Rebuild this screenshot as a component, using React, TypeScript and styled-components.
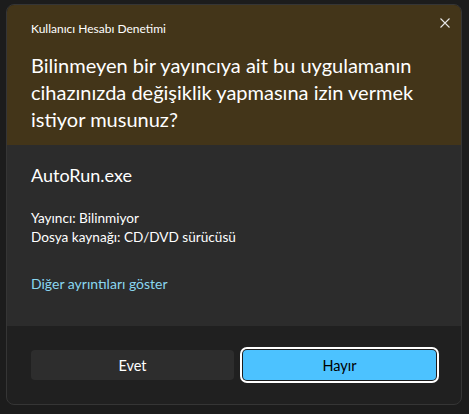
import React from "react";
import styled, { createGlobalStyle } from "styled-components";

const Global = createGlobalStyle`
  html, body { margin: 0; padding: 0; background: #1c1c1c; }
  body { width: 469px; height: 414px; overflow: hidden; font-family: Lato, "Noto Sans", sans-serif; }
  * { box-sizing: border-box; }
`;

const Page = styled.div`
  width: 469px;
  height: 414px;
  padding: 4px 7px 9px 6px;
`;

const Dialog = styled.div`
  width: 456px;
  height: 401px;
  border: 1px solid #353535;
  border-radius: 8px;
  overflow: hidden;
  display: flex;
  flex-direction: column;
  background: #202020;
`;

const Header = styled.div`
  position: relative;
  background: #433519;
  padding: 16px 24px 8px 24px;
  height: 140px;
`;

const SmallTitle = styled.div`
  font-size: 12px;
  line-height: 16px;
  color: #ffffff;
`;

const Heading = styled.div`
  margin-top: 15px;
  font-size: 20px;
  line-height: 27px;
  color: #ffffff;
`;

const Close = styled.button`
  position: absolute;
  top: 8px;
  right: 6px;
  width: 20px;
  height: 20px;
  padding: 0;
  border: none;
  background: transparent;
  display: flex;
  align-items: center;
  justify-content: center;
`;

const Body = styled.div`
  background: #2c2c2c;
  padding: 18px 24px 0 24px;
  height: 181px;
`;

const AppName = styled.div`
  font-size: 18px;
  line-height: 24px;
  color: #ffffff;
`;

const Info = styled.div`
  margin-top: 22px;
  font-size: 13.6px;
  line-height: 19px;
  color: #ffffff;
`;

const Link = styled.div`
  margin-top: 27px;
  font-size: 14px;
  line-height: 20px;
  color: #8ad6f0;
`;

const Footer = styled.div`
  flex: 1;
  padding: 24px 25px 0 24px;
  display: flex;
  gap: 9px;
`;

const Button = styled.button<{ $primary?: boolean }>`
  height: 30px;
  border: none;
  border-radius: 4px;
  font-family: inherit;
  font-size: 14.5px;
  color: ${(p) => (p.$primary ? "#000000" : "#ffffff")};
  background: ${(p) => (p.$primary ? "#4cc2ff" : "#2d2d2d")};
  box-shadow: ${(p) => (p.$primary ? "0 0 0 1px #1c1c1c, 0 0 0 3px #ffffff" : "none")};
  width: ${(p) => (p.$primary ? "193px" : "203px")};
`;

export default function App() {
  return (
    <>
      <Global />
      <Page>
        <Dialog>
          <Header>
            <SmallTitle>Kullanıcı Hesabı Denetimi</SmallTitle>
            <Heading>
              Bilinmeyen bir yayıncıya ait bu uygulamanın cihazınızda değişiklik yapmasına izin vermek istiyor musunuz?
            </Heading>
            <Close aria-label="Kapat">
              <svg width="10" height="10" viewBox="0 0 10 10">
                <path d="M0.5 0.5 L9.5 9.5 M9.5 0.5 L0.5 9.5" stroke="#e6e6e6" strokeWidth="1.1" fill="none" />
              </svg>
            </Close>
          </Header>
          <Body>
            <AppName>AutoRun.exe</AppName>
            <Info>
              Yayıncı: Bilinmiyor
              <br />
              Dosya kaynağı: CD/DVD sürücüsü
            </Info>
            <Link>Diğer ayrıntıları göster</Link>
          </Body>
          <Footer>
            <Button>Evet</Button>
            <Button $primary>Hayır</Button>
          </Footer>
        </Dialog>
      </Page>
    </>
  );
}
